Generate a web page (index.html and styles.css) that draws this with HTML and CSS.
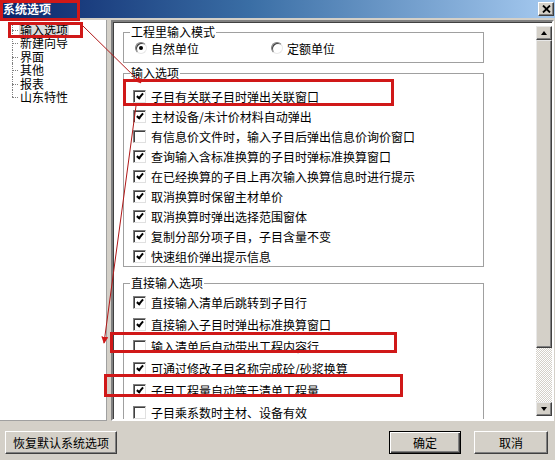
FILE: index.html
```html
<!DOCTYPE html>
<html lang="zh-CN">
  <head>
    <meta charset="UTF-8" />
    <title>系统选项</title>
    <link rel="stylesheet" href="styles.css">
  </head>
  <body>
    <div class="dialog">
      <div class="titlebar">
        <span class="title">系统选项</span>
        <span class="close-btn">
          <svg width="9" height="8" viewBox="0 0 9 8">
            <path d="M1 0.5 L8 7.5 M8 0.5 L1 7.5" stroke="#000" stroke-width="1.8" fill="none" />
          </svg>
        </span>
      </div>

      <div class="main">
        <ul class="tree">
          <li class="selected"><span>输入选项</span></li>
          <li><span>新建向导</span></li>
          <li><span>界面</span></li>
          <li><span>其他</span></li>
          <li><span>报表</span></li>
          <li><span>山东特性</span></li>
        </ul>

        <div class="panel">
          <div class="panel-content">
            <fieldset class="group group-mode">
              <legend>工程里输入模式</legend>
              <div class="radio-row">
                <label class="radio checked"><span class="dot"></span>自然单位</label>
                <label class="radio"><span class="dot"></span>定额单位</label>
              </div>
            </fieldset>

            <fieldset class="group group-input">
              <legend>输入选项</legend>
              <div class="check-row"><span class="box checked"></span>子目有关联子目时弹出关联窗口</div>
              <div class="check-row"><span class="box checked"></span>主材设备/未计价材料自动弹出</div>
              <div class="check-row"><span class="box"></span>有信息价文件时，输入子目后弹出信息价询价窗口</div>
              <div class="check-row"><span class="box checked"></span>查询输入含标准换算的子目时弹标准换算窗口</div>
              <div class="check-row"><span class="box checked"></span>在已经换算的子目上再次输入换算信息时进行提示</div>
              <div class="check-row"><span class="box checked"></span>取消换算时保留主材单价</div>
              <div class="check-row"><span class="box checked"></span>取消换算时弹出选择范围窗体</div>
              <div class="check-row"><span class="box checked"></span>复制分部分项子目，子目含量不变</div>
              <div class="check-row"><span class="box checked"></span>快速组价弹出提示信息</div>
            </fieldset>

            <fieldset class="group group-direct">
              <legend>直接输入选项</legend>
              <div class="check-row"><span class="box checked"></span>直接输入清单后跳转到子目行</div>
              <div class="check-row"><span class="box checked"></span>直接输入子目时弹出标准换算窗口</div>
              <div class="check-row"><span class="box"></span>输入清单后自动带出工程内容行</div>
              <div class="check-row"><span class="box checked"></span>可通过修改子目名称完成砼/砂浆换算</div>
              <div class="check-row"><span class="box checked"></span>子目工程量自动等于清单工程量</div>
              <div class="check-row"><span class="box"></span>子目乘系数时主材、设备有效</div>
            </fieldset>
          </div>

          <div class="scrollbar">
            <span class="sb-btn sb-up"></span>
            <span class="sb-thumb"></span>
            <span class="sb-track"></span>
            <span class="sb-btn sb-down"></span>
          </div>
        </div>
      </div>

      <div class="footer">
        <button class="btn btn-reset">恢复默认系统选项</button>
        <button class="btn btn-ok">确定</button>
        <button class="btn btn-cancel">取消</button>
      </div>

      <!-- red markup drawn over the screenshot -->
      <svg class="annotations" width="555" height="460" viewBox="0 0 555 460">
        <defs>
          <marker id="arrow" viewBox="0 0 10 10" refX="9" refY="5" markerWidth="7" markerHeight="7" orient="auto">
            <path d="M0 0 L10 5 L0 10 z" fill="#d01818" />
          </marker>
        </defs>
        <g fill="none" stroke="#d01818" stroke-width="3">
          <rect x="1.5" y="1.5" width="77" height="18" />
          <rect x="9.5" y="23.5" width="72" height="13" />
          <rect x="124.5" y="80.5" width="268" height="24" />
          <rect x="111.5" y="333.5" width="284" height="18" />
          <rect x="105.5" y="375.5" width="296" height="20" />
        </g>
        <g stroke="#b01818" stroke-width="1" fill="none">
          <line x1="83" y1="26" x2="141" y2="83" marker-end="url(#arrow)" />
          <line x1="136" y1="106" x2="104" y2="343" marker-end="url(#arrow)" />
        </g>
      </svg>
    </div>
  </body>
</html>
```

FILE: styles.css
```css
body {
  margin: 0;
  font-family: "Noto Sans CJK SC", "Noto Sans", sans-serif;
  font-size: 12px;
  color: #000;
  background-color: #d4d0c8;
}

.dialog {
  position: relative;
  width: 555px;
  height: 460px;
  overflow: hidden;
  background-color: #d4d0c8;
}

/* Title bar */
.titlebar {
  height: 18px;
  display: flex;
  align-items: center;
  justify-content: space-between;
  padding: 0 1px 0 3px;
  background: linear-gradient(90deg, #0a246a 0%, #3a6ea5 45%, #a6caf0 100%);
}

.title {
  color: #fff;
  font-weight: bold;
  font-size: 12px;
  line-height: 18px;
}

.close-btn {
  width: 14px;
  height: 12px;
  display: flex;
  align-items: center;
  justify-content: center;
  background-color: #d4d0c8;
  border: 1px solid;
  border-color: #fff #404040 #404040 #fff;
  box-shadow: inset -1px -1px #808080;
}

/* Body: tree on the left, options on the right */
.main {
  display: flex;
  height: 401px;
  margin-top: 2px;
}

.tree {
  width: 107px;
  margin: 0;
  padding: 3px 0 0 0;
  list-style: none;
  background-color: #fff;
  border-right: 1px solid #a0a0a0;
  border-bottom: 1px solid #a0a0a0;
  box-sizing: border-box;
}

.tree li {
  position: relative;
  padding-left: 19px;
  height: 13.4px;
  white-space: nowrap;
}

.tree li span {
  display: inline-block;
  vertical-align: top;
  height: 13px;
  line-height: 13px;
  padding: 0 1px;
  overflow: visible;
}

.tree li.selected span {
  background-color: #dcdcdc;
}

/* dotted branch lines */
.tree li:before {
  content: "";
  position: absolute;
  left: 12px;
  top: 7px;
  width: 6px;
  border-top: 1px dotted #808080;
}

.tree li:after {
  content: "";
  position: absolute;
  left: 12px;
  top: 0;
  bottom: 0;
  border-left: 1px dotted #808080;
}

.tree li:last-child:after {
  bottom: 6px;
}

.panel {
  flex: 1;
  display: flex;
  margin-left: 4px;
  margin-right: 1px;
  background-color: #fff;
  border: 2px solid;
  border-color: #808080 #fff #fff #808080;
  box-shadow: inset 1px 1px #404040;
}

.panel-content {
  flex: 1;
  overflow: hidden;
  padding: 3px 0 0 10px;
}

/* Group boxes */
.group {
  width: 361px;
  margin: 0;
  padding: 0 0 0 9px;
  border: 1px solid #a0a0a0;
  box-sizing: border-box;
}

.group legend {
  margin-left: -3px;
  padding: 0 1px;
  line-height: 14px;
}

.group-mode {
  padding-bottom: 5px;
}

.group-input {
  margin-top: 3px;
  padding-top: 6px;
}

.group-direct {
  margin-top: 9px;
  padding-top: 1px;
}

.radio-row {
  display: flex;
  align-items: center;
  height: 18px;
}

.radio {
  display: flex;
  align-items: center;
}

.radio:first-child {
  width: 136px;
  margin-left: 2px;
}

.dot {
  position: relative;
  width: 10px;
  height: 10px;
  margin-right: 4px;
  border: 1px solid;
  border-color: #808080 #e8e8e8 #e8e8e8 #808080;
  border-radius: 50%;
  box-shadow: inset 1px 1px #404040;
  background-color: #fff;
}

.radio.checked .dot:after {
  content: "";
  position: absolute;
  left: 3px;
  top: 3px;
  width: 4px;
  height: 4px;
  border-radius: 50%;
  background-color: #000;
}

.check-row {
  display: flex;
  align-items: center;
  height: 20px;
  white-space: nowrap;
}

.group-direct .check-row {
  height: 22px;
}

.box {
  position: relative;
  flex: none;
  width: 11px;
  height: 11px;
  margin-right: 5px;
  border: 1px solid;
  border-color: #808080 #e0e0e0 #e0e0e0 #808080;
  box-shadow: inset 1px 1px #404040;
  background-color: #fff;
}

.box.checked:after {
  content: "";
  position: absolute;
  left: 4px;
  top: 1px;
  width: 2px;
  height: 5px;
  border-right: 2px solid #000;
  border-bottom: 2px solid #000;
  transform: rotate(40deg);
}

/* Scrollbar */
.scrollbar {
  width: 16px;
  display: flex;
  flex-direction: column;
  margin: 4px 0 3px 0;
}

.sb-btn,
.sb-thumb {
  display: block;
  background-color: #d4d0c8;
  border: 1px solid;
  border-color: #e8e8e8 #404040 #404040 #e8e8e8;
  box-shadow: inset -1px -1px #808080;
  box-sizing: border-box;
}

.sb-btn {
  position: relative;
  height: 14px;
}

.sb-btn:after {
  content: "";
  position: absolute;
  left: 4px;
  top: 4px;
  border-left: 3.5px solid transparent;
  border-right: 3.5px solid transparent;
}

.sb-up:after {
  border-bottom: 4px solid #000;
}

.sb-down:after {
  border-top: 4px solid #000;
}

.sb-thumb {
  height: 308px;
}

.sb-track {
  flex: 1;
  background: repeating-conic-gradient(#d4d0c8 0 25%, #fff 0 50%) 0 0 / 2px 2px;
}

/* Footer buttons */
.footer {
  display: flex;
  padding: 10px 7px 0 5px;
}

.btn {
  height: 23px;
  padding: 0;
  font-family: inherit;
  font-size: 12px;
  color: #000;
  background-color: #d4d0c8;
  border: 1px solid;
  border-color: #fff #404040 #404040 #fff;
  box-shadow: inset -1px -1px #808080;
}

.btn-reset {
  width: 112px;
}

.btn-ok {
  width: 72px;
  margin-left: auto;
  border-color: #000;
  box-shadow: inset 1px 1px #fff, inset -1px -1px #404040, inset -2px -2px #808080;
}

.btn-cancel {
  width: 74px;
  margin-left: 13px;
}

.annotations {
  position: absolute;
  top: 0;
  left: 0;
  pointer-events: none;
}
```
